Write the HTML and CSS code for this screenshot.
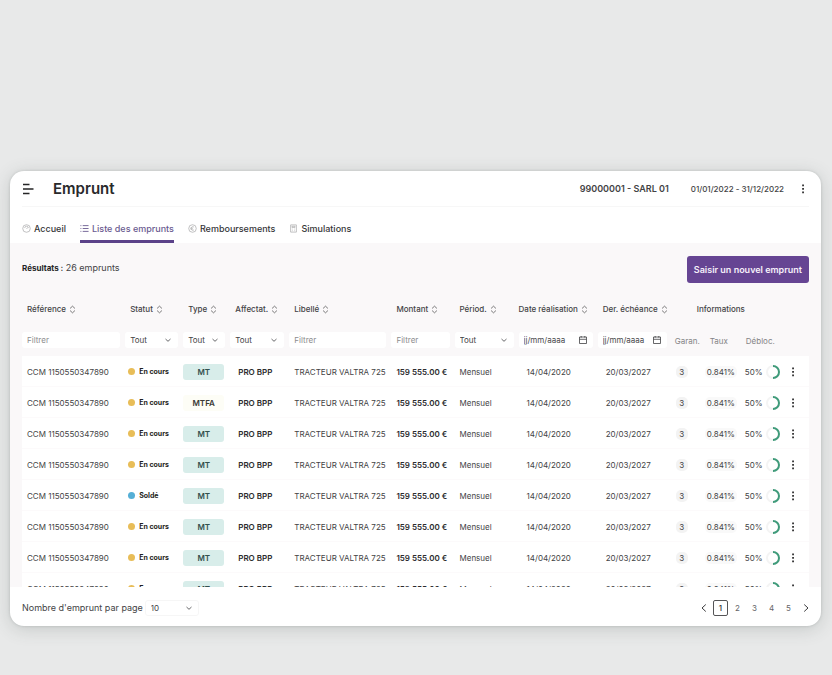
FILE: index.html
```html
<!DOCTYPE html>
<html lang="fr">
<head>
<meta charset="utf-8">
<meta name="viewport" content="width=device-width, initial-scale=1">
<title>Emprunt</title>
<link rel="stylesheet" href="styles.css">
</head>
<body>
<svg class="sprite" aria-hidden="true">
  <symbol id="sort" viewBox="0 0 8 10"><path d="M1.2 3.8 4 1.2 6.8 3.8M1.2 6.2 4 8.8 6.8 6.2"/></symbol>
  <symbol id="down" viewBox="0 0 8 8"><path d="M1.5 3 4 5.3 6.5 3"/></symbol>
  <symbol id="calendar" viewBox="0 0 10 10"><path d="M1.5 2h7v6.5h-7zM1.5 4.3h7M3.2 1v1.6M6.8 1v1.6"/></symbol>
  <symbol id="dots" viewBox="0 0 4 10"><path d="M1.2.6h1.7v1.7H1.2zM1.2 4.1h1.7v1.7H1.2zM1.2 7.6h1.7v1.7H1.2z"/></symbol>
</svg>
<main class="card">
  <header class="topbar">
    <button class="icon-button" aria-label="Menu"><svg class="menu" viewBox="0 0 12 12"><path d="M1 1.5h6.5M1 6h10.5M1 10.5h6.5"/></svg></button>
    <h1>Emprunt</h1>
    <strong class="company">99000001 - SARL 01</strong>
    <span class="period">01/01/2022 - 31/12/2022</span>
    <button class="icon-button" aria-label="Options"><svg class="dots"><use href="#dots"/></svg></button>
  </header>
  <nav class="tabs">
    <a href="#accueil"><svg class="icon faint" viewBox="0 0 10 10"><circle cx="5" cy="5" r="4.2"/><path d="M3 4.5a2 2 0 0 1 4 0M5 5.5 6.3 4"/></svg>Accueil</a>
    <a href="#liste" class="active" aria-current="page"><svg class="icon" viewBox="0 0 10 10"><path d="M.5 1.8h1M.5 5h1M.5 8.2h1M3 1.8H9.5M3 5H9.5M3 8.2H9.5"/></svg>Liste des emprunts</a>
    <a href="#remboursements"><svg class="icon faint" viewBox="0 0 10 10"><circle cx="5" cy="5" r="4.2"/><path d="M6.5 3.3a2 2 0 1 0 0 3.4M2.8 4.5h2.5M2.8 5.6h2.5"/></svg>Remboursements</a>
    <a href="#simulations"><svg class="icon faint" viewBox="0 0 10 10"><path d="M1.8 1h6.4v8H1.8zM3.3 2.5h3.4v1.3H3.3zM3.3 5.6h.7M6 5.6h.7M3.3 7.4h.7M6 7.4h.7"/></svg>Simulations</a>
  </nav>
  <section class="content">
    <div class="summary">
      <p><strong>Résultats :</strong> 26 emprunts</p>
      <button class="primary">Saisir un nouvel emprunt</button>
    </div>
    <div class="table-view">
      <table>
        <colgroup><col class="c-ref"><col class="c-status"><col class="c-type"><col class="c-affect"><col class="c-label"><col class="c-amount"><col class="c-freq"><col class="c-start"><col class="c-end"><col class="c-guar"><col class="c-rate"><col class="c-release"><col class="c-menu"></colgroup>
        <thead>
          <tr class="titles">
            <th>Référence <svg class="sort"><use href="#sort"/></svg></th>
            <th>Statut <svg class="sort"><use href="#sort"/></svg></th>
            <th>Type <svg class="sort"><use href="#sort"/></svg></th>
            <th>Affectat. <svg class="sort"><use href="#sort"/></svg></th>
            <th>Libellé <svg class="sort"><use href="#sort"/></svg></th>
            <th>Montant <svg class="sort"><use href="#sort"/></svg></th>
            <th>Périod. <svg class="sort"><use href="#sort"/></svg></th>
            <th class="flush">Date réalisation <svg class="sort"><use href="#sort"/></svg></th>
            <th>Der. échéance <svg class="sort"><use href="#sort"/></svg></th>
            <th colspan="3" class="group">Informations</th>
            <th></th>
          </tr>
          <tr class="filters">
            <td><input class="field" aria-label="Référence" placeholder="Filtrer"></td>
            <td><label class="pick"><select class="field" aria-label="Statut"><option>Tout</option></select><svg class="down"><use href="#down"/></svg></label></td>
            <td><label class="pick"><select class="field" aria-label="Type"><option>Tout</option></select><svg class="down"><use href="#down"/></svg></label></td>
            <td><label class="pick"><select class="field" aria-label="Affectation"><option>Tout</option></select><svg class="down"><use href="#down"/></svg></label></td>
            <td><input class="field" aria-label="Libellé" placeholder="Filtrer"></td>
            <td><input class="field" aria-label="Montant" placeholder="Filtrer"></td>
            <td><label class="pick"><select class="field" aria-label="Périodicité"><option>Tout</option></select><svg class="down"><use href="#down"/></svg></label></td>
            <td><label class="pick date"><input class="field" aria-label="Date réalisation" placeholder="jj/mm/aaaa"><svg class="calendar"><use href="#calendar"/></svg></label></td>
            <td><label class="pick date"><input class="field" aria-label="Dernière échéance" placeholder="jj/mm/aaaa"><svg class="calendar"><use href="#calendar"/></svg></label></td>
            <th class="sub">Garan.</th>
            <th class="sub inset">Taux</th>
            <th class="sub inset">Débloc.</th>
            <td></td>
          </tr>
        </thead>
        <tbody id="loans"></tbody>
      </table>
    </div>
  </section>
  <footer class="footer">
    <label for="size">Nombre d'emprunt par page</label>
    <span class="pick size"><select id="size" class="field"><option>10</option></select><svg class="down"><use href="#down"/></svg></span>
    <nav class="pages" aria-label="Pagination">
      <button aria-label="Précédent"><svg class="arrow" viewBox="0 0 8 10"><path d="M5.8 1.5 2 5l3.8 3.5"/></svg></button>
      <button class="current" aria-current="page">1</button>
      <button>2</button>
      <button>3</button>
      <button>4</button>
      <button>5</button>
      <button aria-label="Suivant"><svg class="arrow" viewBox="0 0 8 10"><path d="M2.2 1.5 6 5 2.2 8.5"/></svg></button>
    </nav>
  </footer>
</main>
<script src="script.js"></script>
</body>
</html>
```
FILE: styles.css
```css
* { box-sizing: border-box; }

body {
  margin: 0;
  padding: 171px 11px 48px 10px;
  background: #e8e9e9;
  color: #434345;
  font: 8px/12px Inter, "Liberation Sans", sans-serif;
}

button, input, select { font: inherit; color: inherit; }
button { padding: 0; border: 0; background: none; }
h1, p { margin: 0; }

svg { fill: none; stroke: currentColor; flex: none; }
.sprite { display: none; }

.card {
  display: flex;
  flex-direction: column;
  overflow: hidden;
  border-radius: 14px;
  background: #fff;
  box-shadow: 0 3px 18px rgba(60, 75, 70, .2), 0 0 3px rgba(60, 70, 70, .2);
}

.topbar {
  display: flex;
  align-items: center;
  height: 36px;
  margin: 0 12px;
  border-bottom: 1px solid #f7f7f7;
}
.icon-button { display: flex; }
.menu { width: 12px; height: 12px; color: #252526; stroke-width: 1.4; }
.dots { display: block; width: 4px; height: 10px; fill: #252526; stroke: none; }
h1 {
  margin-left: 19px;
  color: #29292b;
  font-size: 15px;
  font-weight: 600;
  line-height: 20px;
}
.company { margin-left: auto; font-size: 9px; font-weight: 600; }
.period { margin: 0 17px 0 22px; font-weight: 500; }
.topbar .icon-button:last-child { margin-right: 4px; }

.tabs { display: flex; gap: 14px; height: 36px; padding: 10px 12px 0; }
.tabs a {
  display: flex;
  align-items: center;
  gap: 3px;
  border-bottom: 3px solid transparent;
  color: #363638;
  font-size: 9px;
  font-weight: 500;
  text-decoration: none;
}
.tabs .active { border-color: #5b4289; color: #6a5a90; }
.icon { width: 9px; height: 9px; }
.faint { color: #aaaaac; stroke-width: .8; }

.content { padding: 13px 12px 0; background: #faf8f9; }
.summary { display: flex; align-items: center; justify-content: space-between; }
.summary p { padding-bottom: 3px; font-size: 9px; }
.summary strong { color: #252526; font-size: 8px; font-weight: 700; }
.primary {
  height: 27px;
  padding: 0 7px;
  border-radius: 3px;
  background: #664593;
  color: #f6f0fa;
  font-size: 9px;
  font-weight: 600;
}

.table-view { max-height: 304px; overflow: hidden; }
table { width: 100%; border-collapse: separate; border-spacing: 0; table-layout: fixed; }
.c-ref { width: 103px; }
.c-label { width: 102px; }
.c-status { width: 58px; }
.c-type { width: 47px; }
.c-affect { width: 59px; }
.c-amount { width: 63px; }
.c-freq { width: 64px; }
.c-start { width: 79px; }
.c-end { width: 74px; }
.c-guar { width: 32px; }
.c-rate { width: 36px; }
.c-release { width: 43px; }
.c-menu { width: 26px; }

th, td { padding: 0 0 0 5px; font-weight: 400; text-align: left; white-space: nowrap; }
.flush { padding-left: 0; }
.titles th { height: 42px; padding-top: 10px; font-weight: 500; }
.titles .group { padding-left: 25px; }
.sort { width: 7px; height: 9px; margin-left: 1px; stroke-width: .8; vertical-align: -2px; }
.filters td, .filters th { height: 31px; padding-bottom: 2px; }
.filters td { padding-left: 0; padding-right: 5px; }
.filters .sub { padding: 0 0 0 3px; color: #848486; }
.filters .inset { padding-left: 6px; }

.field {
  display: block;
  width: 100%;
  height: 16px;
  margin: 0;
  padding: 0 5px;
  border: 0;
  border-radius: 3px;
  background: #fff;
  appearance: none;
}
.field::placeholder { color: #8c8c8e; opacity: 1; }
.date .field::placeholder { color: #4a4a4c; }
.pick { display: block; position: relative; }
.down { position: absolute; top: 4px; right: 6px; width: 8px; height: 8px; stroke-width: .8; }
.calendar { position: absolute; top: 3px; right: 5px; width: 10px; height: 10px; stroke-width: .8; }

tbody td { height: 31px; padding-top: 1px; border-bottom: 1px solid #fcfafb; background: #fff; }
.status { display: flex; align-items: center; gap: 4px; font-size: 7px; font-weight: 700; color: #1e1e20; }
.status::before { content: ""; width: 7px; height: 7px; border-radius: 50%; background: #e8bd58; }
.status.closed::before { background: #55afd6; }
tbody .status-cell { padding-left: 3px; }
tbody .type-cell { padding: 1px 6px 0 0; }
.type {
  display: block;
  height: 16px;
  border-radius: 3px;
  background: #d8edea;
  color: #34504d;
  font-weight: 600;
  line-height: 16px;
  text-align: center;
}
.type.mtfa { background: #fdfdf6; color: #3a3a35; }
.bold { font-weight: 600; color: #2c2c2e; }
tbody .pad { padding-left: 8px; }
.count, .rate { display: inline-block; border-radius: 5px; background: #f3f3f3; text-align: center; }
.count { width: 12px; margin-left: -1px; }
tbody .rate-cell { padding-left: 1px; }
.rate { padding: 0 2px; background: #f9f9f9; }
.release { display: flex; align-items: center; gap: 2px; }
.ring { width: 16px; height: 16px; stroke-width: 2; }
.ring circle { stroke: #f4f4f4; }
.ring path { stroke: #3f9b7a; }

.footer { display: flex; align-items: center; height: 39px; padding: 2px 8px 0 12px; font-size: 9px; }
.size { width: 54px; margin-left: 2px; font-size: 8px; }
.size .field { border: 1px solid #f6f6f6; }
.pages { display: flex; align-items: center; gap: 2px; margin-left: auto; color: #666668; font-size: 8px; }
.pages button { display: grid; place-items: center; width: 15px; height: 16px; }
.pages .current { border: 1px solid #555557; border-radius: 2px; color: #303032; font-weight: 500; }
.arrow { width: 8px; height: 10px; color: #3c3c3e; }
```
FILE: script.js
```js
const base = {
  ref: "CCM 1150550347890", status: "En cours", type: "MT", affect: "PRO BPP",
  label: "TRACTEUR VALTRA 725", amount: "159 555.00 €", freq: "Mensuel",
  start: "14/04/2020", end: "20/03/2027", guarantees: 3, rate: "0.841%", release: "50%"
};
const loans = [{}, { type: "MTFA" }, {}, {}, { status: "Soldé" }, {}, {}, {}]
  .map(item => ({ ...base, ...item }));

document.getElementById("loans").innerHTML = loans.map(l => `
  <tr>
    <td>${l.ref}</td>
    <td class="status-cell"><span class="status${l.status === "Soldé" ? " closed" : ""}">${l.status}</span></td>
    <td class="type-cell"><span class="type ${l.type.toLowerCase()}">${l.type}</span></td>
    <td class="bold pad">${l.affect}</td>
    <td>${l.label}</td>
    <td class="bold">${l.amount}</td>
    <td>${l.freq}</td>
    <td class="pad">${l.start}</td>
    <td class="pad">${l.end}</td>
    <td><span class="count">${l.guarantees}</span></td>
    <td class="rate-cell"><span class="rate">${l.rate}</span></td>
    <td><span class="release">${l.release}<svg class="ring" viewBox="0 0 16 16"><circle cx="8" cy="8" r="6"/><path d="M8 2a6 6 0 0 1 0 12"/></svg></span></td>
    <td class="pad"><button class="icon-button" aria-label="Actions"><svg class="dots"><use href="#dots"/></svg></button></td>
  </tr>`).join("");
```
